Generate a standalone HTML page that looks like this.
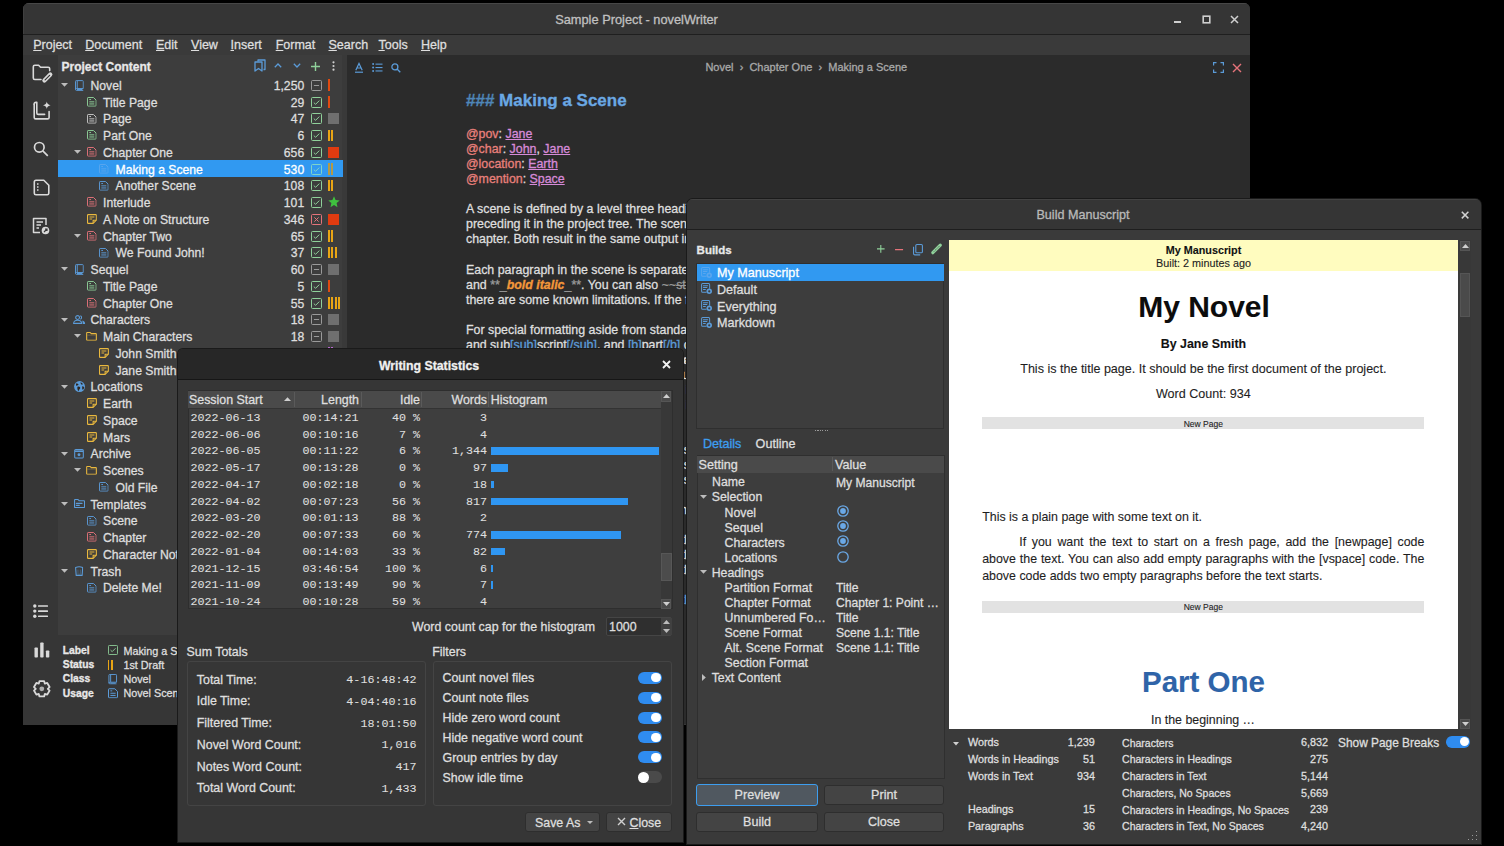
<!DOCTYPE html><html><head><meta charset="utf-8"><style>
*{margin:0;padding:0;box-sizing:border-box}
html,body{width:1504px;height:846px;overflow:hidden;background:#000}
body{position:relative;font-family:"Liberation Sans",sans-serif}
.win,.win *{position:absolute}
.win{overflow:hidden}
.win u, .win span, .win i, .win s{position:static}
.t{white-space:nowrap;-webkit-text-stroke:0.3px currentColor}
.m{font-family:"Liberation Mono",monospace;-webkit-text-stroke:0.1px currentColor}
svg{overflow:visible}
</style></head><body>
<svg width="0" height="0" style="position:absolute">
<defs>
<symbol id="doc" viewBox="0 0 10 10"><g fill="none" stroke="currentColor" stroke-width="1" stroke-linejoin="round"><path d="M0.5 1.2Q0.5 0.5 1.2 0.5H6.8L9.5 3.2V8.8Q9.5 9.5 8.8 9.5H1.2Q0.5 9.5 0.5 8.8Z"/><path d="M2.4 2.6H4.2M2.4 5H7.6M2.4 7.2H7.6"/></g></symbol>
<symbol id="note" viewBox="0 0 10 10"><g fill="none" stroke="currentColor" stroke-width="1.1" stroke-linejoin="round"><path d="M0.55 1.2Q0.55 0.55 1.2 0.55H8.8Q9.45 0.55 9.45 1.2V6.2L6.2 9.45H1.2Q0.55 9.45 0.55 8.8Z"/><path d="M6.2 9.3V6.2H9.3"/><path d="M2.5 2.9H7.5M2.5 5H5.3"/></g></symbol>
<symbol id="book" viewBox="0 0 9 11"><g fill="none" stroke="currentColor" stroke-width="1" stroke-linejoin="round"><path d="M0.5 1.3Q0.5 0.5 1.3 0.5H7.7Q8.5 0.5 8.5 1.3V8.6H1.6Q0.5 8.6 0.5 9.5V1.3Z"/><path d="M0.5 9.5Q0.5 10.5 1.6 10.5H8.5"/><path d="M2.3 0.8V8.3"/><path d="M2 9.6H7.5"/></g></symbol>
<symbol id="people" viewBox="0 0 12.4 9"><g fill="none" stroke="currentColor" stroke-width="1.05"><circle cx="4.6" cy="2.5" r="1.9"/><path d="M0.6 8.4Q0.6 5.3 4.6 5.3Q8.6 5.3 8.6 8.4Z"/><path d="M7.3 0.7A1.9 1.9 0 0 1 7.3 4.3"/></g><path d="M9.3 5.4Q12.2 6 12.2 8.9H9.8Z" fill="currentColor"/></symbol>
<symbol id="folder" viewBox="0 0 11 9"><path d="M0.55 1.1Q0.55 0.55 1.1 0.55H4.2L5.3 1.7H9.9Q10.45 1.7 10.45 2.3V7.9Q10.45 8.45 9.9 8.45H1.1Q0.55 8.45 0.55 7.9Z" fill="none" stroke="currentColor" stroke-width="1.1" stroke-linejoin="round"/><path d="M1.3 3.2H9.7" stroke="currentColor" stroke-width="0.6" opacity="0.5"/></symbol>
<symbol id="globe" viewBox="0 0 11 11"><circle cx="5.5" cy="5.5" r="5.4" fill="currentColor"/><path d="M1.9 2.6Q3.6 2 4.6 3.4Q3.6 4.4 2.9 4.6Q2.3 4.9 2.1 4.1Z M3.4 5.6Q5.3 5.2 6.1 6.2Q6.5 7.5 5.4 8.1Q4.6 9.6 4.3 10.2Q3.4 8.7 3.3 7.2Z M6.4 1.2Q8.3 1.8 8.9 3.2Q8.2 3.7 7.2 3.5Q6.5 2.5 6.4 1.2Z M8.2 5.2Q9.6 5.1 10.1 6.6Q9.5 8.4 8.5 8.7Q7.8 7.2 8.2 5.2Z" fill="#2d2620"/></symbol>
<symbol id="archive" viewBox="0 0 10 10"><g fill="none" stroke="currentColor" stroke-width="1.1" stroke-linejoin="round"><rect x="0.55" y="0.55" width="8.9" height="8.9" rx="1.1"/><path d="M0.8 2.6H9.2"/></g><path d="M1 1H9V2.4H1Z" fill="currentColor" opacity="0.6"/><circle cx="5" cy="5.9" r="1.5" fill="currentColor"/></symbol>
<symbol id="templ" viewBox="0 0 11 9"><g fill="none" stroke="currentColor" stroke-width="1.1" stroke-linejoin="round"><path d="M0.55 1.1Q0.55 0.55 1.1 0.55H4L5.1 1.7H9.9Q10.45 1.7 10.45 2.3V7.9Q10.45 8.45 9.9 8.45H1.1Q0.55 8.45 0.55 7.9Z"/></g><path d="M2.3 4.3H8M2.3 6.3H5.3" stroke="currentColor" stroke-width="1.1" stroke-linecap="round"/></symbol>
<symbol id="trash" viewBox="0 0 8.4 10"><g fill="none" stroke="currentColor" stroke-width="1.1" stroke-linejoin="round"><path d="M0.6 1.4Q4.2 0.1 7.8 1.4L7.2 9.4H1.2Z"/></g><path d="M3 3.5V7.8M5.4 3.5V7.8M2.4 8.2H6" stroke="currentColor" stroke-width="0.7" opacity="0.55"/></symbol>
<symbol id="chk" viewBox="0 0 11 11"><g fill="none" stroke="currentColor" stroke-width="1"><rect x="0.5" y="0.5" width="10" height="10" rx="1"/><path d="M2.8 5.6L4.6 7.3L8.3 3.6"/></g></symbol>
<symbol id="minus" viewBox="0 0 11 11"><g fill="none" stroke="currentColor" stroke-width="1"><rect x="0.5" y="0.5" width="10" height="10" rx="1"/><path d="M2.9 5.5H8.1"/></g></symbol>
<symbol id="xbox" viewBox="0 0 11 11"><g fill="none" stroke="currentColor" stroke-width="1"><rect x="0.5" y="0.5" width="10" height="10" rx="1"/><path d="M3.4 3.4L7.6 7.6M7.6 3.4L3.4 7.6"/></g></symbol>
<symbol id="star" viewBox="0 0 12 12"><path d="M6 0.3L7.6 4.1L11.7 4.4L8.6 7.1L9.5 11.2L6 9.1L2.5 11.2L3.4 7.1L0.3 4.4L4.4 4.1Z" fill="currentColor"/></symbol>
<symbol id="build" viewBox="0 0 11 11"><g fill="none" stroke="currentColor" stroke-width="1" stroke-linecap="round" stroke-linejoin="round"><path d="M8.5 5.2V1.6Q8.5 0.6 7.5 0.6H1.6Q0.6 0.6 0.6 1.6V8.1Q0.6 9.1 1.6 9.1H5"/><path d="M2.4 2.7H6.6M2.4 4.5H5.8M2.4 6.3H4.3"/></g><circle cx="8.1" cy="8.2" r="2.7" fill="currentColor"/><circle cx="8.1" cy="8.2" r="1.1" style="fill:var(--bg,#3d3d3d)"/></symbol>
</defs></svg>
<div class="win" style="left:23px;top:3px;width:1227px;height:722px;border-radius:6px 6px 0 0;background:#363636;"><div style="left:0.00px;top:0.00px;width:1227.00px;height:31.00px;background:#353535;"></div>
<div style="left:0.00px;top:31.00px;width:1227.00px;height:1.00px;background:#1f1f1f;"></div>
<div style="left:0.00px;top:0.00px;width:1227.00px;height:1.00px;background:#474747;"></div>
<div style="left:0.00px;top:0.00px;width:1.00px;height:31.00px;background:#3f3f3f;"></div>
<div class="t" style="top:11.26px;font-size:12.8px;line-height:12.8px;color:#c0c0c0;left:613.50px;transform:translateX(-50%);">Sample Project - novelWriter</div>
<div style="left:1151.00px;top:18.00px;width:7.00px;height:1.60px;background:#cfcfcf;"></div>
<svg style="left:1179.00px;top:12.00px;" width="9" height="9" viewBox="0 0 9 9"><rect x="1.2" y="1.2" width="6.6" height="6.6" fill="none" stroke="#cfcfcf" stroke-width="1.6"/></svg>
<svg style="left:1207.00px;top:12.00px;" width="9" height="9" viewBox="0 0 9 9"><path d="M1 1L8 8M8 1L1 8" stroke="#cfcfcf" stroke-width="1.5"/></svg>
<div style="left:0.00px;top:32.00px;width:1227.00px;height:20.00px;background:#3a3a3a;"></div>
<div class="t" style="top:35.62px;font-size:12.5px;line-height:12.5px;color:#dedede;left:10.20px;"><u>P</u>roject</div>
<div class="t" style="top:35.62px;font-size:12.5px;line-height:12.5px;color:#dedede;left:62.20px;"><u>D</u>ocument</div>
<div class="t" style="top:35.62px;font-size:12.5px;line-height:12.5px;color:#dedede;left:133.00px;"><u>E</u>dit</div>
<div class="t" style="top:35.62px;font-size:12.5px;line-height:12.5px;color:#dedede;left:168.00px;"><u>V</u>iew</div>
<div class="t" style="top:35.62px;font-size:12.5px;line-height:12.5px;color:#dedede;left:207.50px;"><u>I</u>nsert</div>
<div class="t" style="top:35.62px;font-size:12.5px;line-height:12.5px;color:#dedede;left:252.70px;"><u>F</u>ormat</div>
<div class="t" style="top:35.62px;font-size:12.5px;line-height:12.5px;color:#dedede;left:305.50px;"><u>S</u>earch</div>
<div class="t" style="top:35.62px;font-size:12.5px;line-height:12.5px;color:#dedede;left:355.50px;"><u>T</u>ools</div>
<div class="t" style="top:35.62px;font-size:12.5px;line-height:12.5px;color:#dedede;left:398.00px;"><u>H</u>elp</div>
<div style="left:0.00px;top:52.00px;width:35.00px;height:669.00px;background:#363636;"></div>
<div style="left:35.00px;top:52.00px;width:284.00px;height:580.00px;background:#3d3d3d;"></div>
<div style="left:319.00px;top:52.00px;width:4.50px;height:669.00px;background:#393939;"></div>
<div style="left:35.00px;top:632.00px;width:284.00px;height:89.00px;background:#363636;"></div>
<div style="left:323.50px;top:52.00px;width:903.50px;height:669.00px;background:#2b2b2b;"></div>
<svg style="left:8.50px;top:60.50px;" width="20" height="18" viewBox="0 0 20 18"><g fill="none" stroke="#d9d9d9" stroke-width="1.6" stroke-linejoin="round" stroke-linecap="round"><path d="M9 15.5H2.8Q1.3 15.5 1.3 14V2.8Q1.3 1.3 2.8 1.3H6.6L8.6 3.3H16.2Q17.7 3.3 17.7 4.8V6.6"/></g><path d="M18.3 10.6L12.4 16.5" stroke="#d9d9d9" stroke-width="4.2" stroke-linecap="round"/><path d="M17.6 11.3L13.1 15.8" stroke="#363636" stroke-width="1.2" stroke-linecap="round"/></svg>
<svg style="left:10.00px;top:97.50px;" width="18" height="19" viewBox="0 0 18 19"><g fill="none" stroke="#d9d9d9" stroke-width="1.6" stroke-linejoin="round" stroke-linecap="round"><path d="M1.2 3.2V16.4Q1.2 17.9 2.7 17.9H14.6Q16.1 17.9 16.1 16.4V10.6"/><path d="M1.2 3.2Q1.2 1.2 3 1.2H3.8V11.9Q3.8 13.4 5.3 13.4H11.6"/></g><path d="M13.8 0.6Q14.2 3.8 17.6 4.3Q14.2 4.8 13.8 8Q13.4 4.8 10 4.3Q13.4 3.8 13.8 0.6Z" fill="#d9d9d9"/></svg>
<svg style="left:10.00px;top:138.00px;" width="16" height="16" viewBox="0 0 16 16"><g fill="none" stroke="#d9d9d9" stroke-width="1.7"><circle cx="6.3" cy="6.3" r="4.8"/><path d="M9.8 9.8L14.8 14.8"/></g></svg>
<svg style="left:9.50px;top:176.00px;" width="17" height="17" viewBox="0 0 17 17"><g fill="none" stroke="#d9d9d9" stroke-width="1.6" stroke-linejoin="round"><path d="M3 1.2H10.8L15.8 6.2V14.2Q15.8 15.8 14.2 15.8H3Q1.3 15.8 1.3 14.2V2.9Q1.3 1.2 3 1.2Z"/></g><path d="M4 5H5.5M4 8H5.5M4 11H5.5" stroke="#d9d9d9" stroke-width="1.5"/></svg>
<svg style="left:9.00px;top:214.00px;" width="18" height="18" viewBox="0 0 18 18"><g fill="none" stroke="#d9d9d9" stroke-width="1.5" stroke-linejoin="round"><path d="M8 15.5H1.5V1.5H14V8"/><path d="M4.5 5H11M4.5 8H9M4.5 11H7"/></g><circle cx="13.5" cy="13.5" r="3.8" fill="#d9d9d9"/><path d="M12 15L15 12M13 12H15V14" stroke="#363636" stroke-width="1.2" fill="none"/></svg>
<svg style="left:9.50px;top:600.60px;" width="16" height="14" viewBox="0 0 16 14"><g fill="#d9d9d9"><circle cx="1.8" cy="2" r="1.7"/><circle cx="1.8" cy="7.1" r="1.7"/><circle cx="1.8" cy="12.2" r="1.7"/><rect x="5" y="1.2" width="10" height="1.6" rx="0.5"/><rect x="5" y="6.3" width="10" height="1.6" rx="0.5"/><rect x="5" y="11.4" width="10" height="1.6" rx="0.5"/></g></svg>
<svg style="left:10.50px;top:638.50px;" width="16" height="16" viewBox="0 0 16 16"><g fill="#d9d9d9"><rect x="0.5" y="5.5" width="3.4" height="10" rx="0.8"/><rect x="6.2" y="0.5" width="3.4" height="15" rx="0.8"/><rect x="11.9" y="8.5" width="3.4" height="7" rx="0.8"/></g></svg>
<svg style="left:9.80px;top:676.60px;" width="18" height="18" viewBox="0 0 18 18"><polygon points="6.44,1.16 11.16,1.16 11.78,3.59 11.82,3.61 14.24,2.93 16.60,7.03 14.80,8.78 14.80,8.82 16.60,10.57 14.24,14.67 11.82,13.99 11.78,14.01 11.16,16.44 6.44,16.44 5.82,14.01 5.78,13.99 3.36,14.67 1.00,10.57 2.80,8.82 2.80,8.78 1.00,7.03 3.36,2.93 5.78,3.61 5.82,3.59" fill="none" stroke="#d9d9d9" stroke-width="1.8" stroke-linejoin="round"/><circle cx="8.8" cy="8.8" r="2.4" fill="#b0b0b0"/></svg>
<div class="t" style="top:57.94px;font-size:12px;line-height:12px;color:#e8e8e8;font-weight:bold;left:38.50px;">Project Content</div>
<svg style="left:231.00px;top:56.00px;" width="12" height="13" viewBox="0 0 12 13"><g fill="none" stroke="#5b9bd8" stroke-width="1.3" stroke-linejoin="round"><path d="M4 2.5V1H11V10.5H9.5"/><path d="M1 3H8V12L4.5 9.5L1 12Z"/></g></svg>
<svg style="left:251.00px;top:60.00px;" width="8" height="5" viewBox="0 0 8 5"><path d="M0.8 4.2L4 1L7.2 4.2" fill="none" stroke="#5b9bd8" stroke-width="1.3"/></svg>
<svg style="left:270.00px;top:60.00px;" width="8" height="5" viewBox="0 0 8 5"><path d="M0.8 0.8L4 4L7.2 0.8" fill="none" stroke="#5b9bd8" stroke-width="1.3"/></svg>
<svg style="left:288.00px;top:58.50px;" width="9" height="9" viewBox="0 0 9 9"><path d="M4.5 0V9M0 4.5H9" stroke="#8fd19a" stroke-width="1.4"/></svg>
<svg style="left:309.00px;top:58.00px;" width="3" height="10" viewBox="0 0 3 10"><g fill="#d0d0d0"><circle cx="1.5" cy="1.3" r="1.1"/><circle cx="1.5" cy="5" r="1.1"/><circle cx="1.5" cy="8.7" r="1.1"/></g></svg>
<svg style="left:38.00px;top:80.10px;" width="7" height="4" viewBox="0 0 7 4"><path d="M0 0H7L3.5 3.8Z" fill="#bdbdbd"/></svg>
<svg style="left:51.80px;top:76.50px;color:#5b9bd8" width="8.8" height="11"><use href="#book"/></svg>
<div class="t" style="top:76.97px;font-size:12.2px;line-height:12.2px;color:#dedede;left:67.50px;">Novel</div>
<div class="t" style="top:76.97px;font-size:12.2px;line-height:12.2px;color:#dedede;left:281.20px;transform:translateX(-100%);">1,250</div>
<svg style="left:287.50px;top:76.80px;color:#9a9a9a" width="11" height="11"><use href="#minus"/></svg>
<div style="left:305.00px;top:76.30px;width:2.00px;height:11.60px;background:#e04a10;"></div>
<svg style="left:63.90px;top:93.90px;color:#8fd19a" width="9.6" height="9.7"><use href="#doc"/></svg>
<div class="t" style="top:93.72px;font-size:12.2px;line-height:12.2px;color:#dedede;left:80.00px;">Title Page</div>
<div class="t" style="top:93.72px;font-size:12.2px;line-height:12.2px;color:#dedede;left:281.20px;transform:translateX(-100%);">29</div>
<svg style="left:287.50px;top:93.55px;color:#8fd19a" width="11" height="11"><use href="#chk"/></svg>
<div style="left:305.00px;top:93.05px;width:2.00px;height:11.60px;background:#e04a10;"></div>
<svg style="left:63.90px;top:110.65px;color:#c8c8c8" width="9.6" height="9.7"><use href="#doc"/></svg>
<div class="t" style="top:110.47px;font-size:12.2px;line-height:12.2px;color:#dedede;left:80.00px;">Page</div>
<div class="t" style="top:110.47px;font-size:12.2px;line-height:12.2px;color:#dedede;left:281.20px;transform:translateX(-100%);">47</div>
<svg style="left:287.50px;top:110.30px;color:#8fd19a" width="11" height="11"><use href="#chk"/></svg>
<div style="left:305.00px;top:110.20px;width:11.00px;height:11.00px;background:#6f6f6f;"></div>
<svg style="left:63.90px;top:127.40px;color:#8fd19a" width="9.6" height="9.7"><use href="#doc"/></svg>
<div class="t" style="top:127.22px;font-size:12.2px;line-height:12.2px;color:#dedede;left:80.00px;">Part One</div>
<div class="t" style="top:127.22px;font-size:12.2px;line-height:12.2px;color:#dedede;left:281.20px;transform:translateX(-100%);">6</div>
<svg style="left:287.50px;top:127.05px;color:#8fd19a" width="11" height="11"><use href="#chk"/></svg>
<div style="left:305.00px;top:126.55px;width:2.00px;height:11.60px;background:#e9a514;"></div>
<div style="left:308.30px;top:126.55px;width:2.00px;height:11.60px;background:#e9a514;"></div>
<svg style="left:50.50px;top:147.10px;" width="7" height="4" viewBox="0 0 7 4"><path d="M0 0H7L3.5 3.8Z" fill="#bdbdbd"/></svg>
<svg style="left:63.90px;top:144.15px;color:#e5737a" width="9.6" height="9.7"><use href="#doc"/></svg>
<div class="t" style="top:143.97px;font-size:12.2px;line-height:12.2px;color:#dedede;left:80.00px;">Chapter One</div>
<div class="t" style="top:143.97px;font-size:12.2px;line-height:12.2px;color:#dedede;left:281.20px;transform:translateX(-100%);">656</div>
<svg style="left:287.50px;top:143.80px;color:#8fd19a" width="11" height="11"><use href="#chk"/></svg>
<div style="left:305.00px;top:143.70px;width:11.00px;height:11.00px;background:#e03b10;"></div>
<div style="left:35.00px;top:157.00px;width:284.50px;height:17.00px;background:#3199f1;"></div>
<svg style="left:76.40px;top:160.90px;color:#5aa6ee" width="9.6" height="9.7"><use href="#doc"/></svg>
<div class="t" style="top:160.72px;font-size:12.2px;line-height:12.2px;color:#ffffff;left:92.50px;">Making a Scene</div>
<div class="t" style="top:160.72px;font-size:12.2px;line-height:12.2px;color:#ffffff;left:281.20px;transform:translateX(-100%);">530</div>
<svg style="left:287.50px;top:160.55px;color:#7fd3c8" width="11" height="11"><use href="#chk"/></svg>
<div style="left:305.00px;top:160.05px;width:2.00px;height:11.60px;background:#b59a45;"></div>
<div style="left:308.30px;top:160.05px;width:2.00px;height:11.60px;background:#b59a45;"></div>
<svg style="left:76.40px;top:177.65px;color:#5b9bd8" width="9.6" height="9.7"><use href="#doc"/></svg>
<div class="t" style="top:177.47px;font-size:12.2px;line-height:12.2px;color:#dedede;left:92.50px;">Another Scene</div>
<div class="t" style="top:177.47px;font-size:12.2px;line-height:12.2px;color:#dedede;left:281.20px;transform:translateX(-100%);">108</div>
<svg style="left:287.50px;top:177.30px;color:#8fd19a" width="11" height="11"><use href="#chk"/></svg>
<div style="left:305.00px;top:176.80px;width:2.00px;height:11.60px;background:#e9a514;"></div>
<div style="left:308.30px;top:176.80px;width:2.00px;height:11.60px;background:#e9a514;"></div>
<svg style="left:63.90px;top:194.40px;color:#e5737a" width="9.6" height="9.7"><use href="#doc"/></svg>
<div class="t" style="top:194.22px;font-size:12.2px;line-height:12.2px;color:#dedede;left:80.00px;">Interlude</div>
<div class="t" style="top:194.22px;font-size:12.2px;line-height:12.2px;color:#dedede;left:281.20px;transform:translateX(-100%);">101</div>
<svg style="left:287.50px;top:194.05px;color:#8fd19a" width="11" height="11"><use href="#chk"/></svg>
<svg style="left:304.50px;top:193.35px;color:#3fc13f" width="12" height="12"><use href="#star"/></svg>
<svg style="left:63.75px;top:211.00px;color:#e9b83e" width="9.9" height="10"><use href="#note"/></svg>
<div class="t" style="top:210.97px;font-size:12.2px;line-height:12.2px;color:#dedede;left:80.00px;">A Note on Structure</div>
<div class="t" style="top:210.97px;font-size:12.2px;line-height:12.2px;color:#dedede;left:281.20px;transform:translateX(-100%);">346</div>
<svg style="left:287.50px;top:210.80px;color:#e5737a" width="11" height="11"><use href="#xbox"/></svg>
<div style="left:305.00px;top:210.70px;width:11.00px;height:11.00px;background:#e03b10;"></div>
<svg style="left:50.50px;top:230.85px;" width="7" height="4" viewBox="0 0 7 4"><path d="M0 0H7L3.5 3.8Z" fill="#bdbdbd"/></svg>
<svg style="left:63.90px;top:227.90px;color:#e5737a" width="9.6" height="9.7"><use href="#doc"/></svg>
<div class="t" style="top:227.72px;font-size:12.2px;line-height:12.2px;color:#dedede;left:80.00px;">Chapter Two</div>
<div class="t" style="top:227.72px;font-size:12.2px;line-height:12.2px;color:#dedede;left:281.20px;transform:translateX(-100%);">65</div>
<svg style="left:287.50px;top:227.55px;color:#8fd19a" width="11" height="11"><use href="#chk"/></svg>
<div style="left:305.00px;top:227.05px;width:2.00px;height:11.60px;background:#e9a514;"></div>
<div style="left:308.30px;top:227.05px;width:2.00px;height:11.60px;background:#e9a514;"></div>
<svg style="left:76.40px;top:244.65px;color:#5b9bd8" width="9.6" height="9.7"><use href="#doc"/></svg>
<div class="t" style="top:244.47px;font-size:12.2px;line-height:12.2px;color:#dedede;left:92.50px;">We Found John!</div>
<div class="t" style="top:244.47px;font-size:12.2px;line-height:12.2px;color:#dedede;left:281.20px;transform:translateX(-100%);">37</div>
<svg style="left:287.50px;top:244.30px;color:#8fd19a" width="11" height="11"><use href="#chk"/></svg>
<div style="left:305.00px;top:243.80px;width:2.00px;height:11.60px;background:#e9a514;"></div>
<div style="left:308.30px;top:243.80px;width:2.00px;height:11.60px;background:#e9a514;"></div>
<div style="left:311.60px;top:243.80px;width:2.00px;height:11.60px;background:#e9a514;"></div>
<svg style="left:38.00px;top:264.35px;" width="7" height="4" viewBox="0 0 7 4"><path d="M0 0H7L3.5 3.8Z" fill="#bdbdbd"/></svg>
<svg style="left:51.80px;top:260.75px;color:#5b9bd8" width="8.8" height="11"><use href="#book"/></svg>
<div class="t" style="top:261.22px;font-size:12.2px;line-height:12.2px;color:#dedede;left:67.50px;">Sequel</div>
<div class="t" style="top:261.22px;font-size:12.2px;line-height:12.2px;color:#dedede;left:281.20px;transform:translateX(-100%);">60</div>
<svg style="left:287.50px;top:261.05px;color:#9a9a9a" width="11" height="11"><use href="#minus"/></svg>
<div style="left:305.00px;top:260.95px;width:11.00px;height:11.00px;background:#6f6f6f;"></div>
<svg style="left:63.90px;top:278.15px;color:#8fd19a" width="9.6" height="9.7"><use href="#doc"/></svg>
<div class="t" style="top:277.97px;font-size:12.2px;line-height:12.2px;color:#dedede;left:80.00px;">Title Page</div>
<div class="t" style="top:277.97px;font-size:12.2px;line-height:12.2px;color:#dedede;left:281.20px;transform:translateX(-100%);">5</div>
<svg style="left:287.50px;top:277.80px;color:#8fd19a" width="11" height="11"><use href="#chk"/></svg>
<div style="left:305.00px;top:277.30px;width:2.00px;height:11.60px;background:#e04a10;"></div>
<svg style="left:63.90px;top:294.90px;color:#e5737a" width="9.6" height="9.7"><use href="#doc"/></svg>
<div class="t" style="top:294.72px;font-size:12.2px;line-height:12.2px;color:#dedede;left:80.00px;">Chapter One</div>
<div class="t" style="top:294.72px;font-size:12.2px;line-height:12.2px;color:#dedede;left:281.20px;transform:translateX(-100%);">55</div>
<svg style="left:287.50px;top:294.55px;color:#8fd19a" width="11" height="11"><use href="#chk"/></svg>
<div style="left:305.00px;top:294.05px;width:2.00px;height:11.60px;background:#e9a514;"></div>
<div style="left:308.30px;top:294.05px;width:2.00px;height:11.60px;background:#e9a514;"></div>
<div style="left:311.60px;top:294.05px;width:2.00px;height:11.60px;background:#e9a514;"></div>
<div style="left:314.90px;top:294.05px;width:2.00px;height:11.60px;background:#e9a514;"></div>
<svg style="left:38.00px;top:314.60px;" width="7" height="4" viewBox="0 0 7 4"><path d="M0 0H7L3.5 3.8Z" fill="#bdbdbd"/></svg>
<svg style="left:50.00px;top:312.00px;color:#5b9bd8" width="12.4" height="9"><use href="#people"/></svg>
<div class="t" style="top:311.47px;font-size:12.2px;line-height:12.2px;color:#dedede;left:67.50px;">Characters</div>
<div class="t" style="top:311.47px;font-size:12.2px;line-height:12.2px;color:#dedede;left:281.20px;transform:translateX(-100%);">18</div>
<svg style="left:287.50px;top:311.30px;color:#9a9a9a" width="11" height="11"><use href="#minus"/></svg>
<div style="left:305.00px;top:311.20px;width:11.00px;height:11.00px;background:#6f6f6f;"></div>
<svg style="left:50.50px;top:331.35px;" width="7" height="4" viewBox="0 0 7 4"><path d="M0 0H7L3.5 3.8Z" fill="#bdbdbd"/></svg>
<svg style="left:63.20px;top:328.85px;color:#e9b83e" width="11" height="8.8"><use href="#folder"/></svg>
<div class="t" style="top:328.22px;font-size:12.2px;line-height:12.2px;color:#dedede;left:80.00px;">Main Characters</div>
<div class="t" style="top:328.22px;font-size:12.2px;line-height:12.2px;color:#dedede;left:281.20px;transform:translateX(-100%);">18</div>
<svg style="left:287.50px;top:328.05px;color:#9a9a9a" width="11" height="11"><use href="#minus"/></svg>
<div style="left:305.00px;top:327.95px;width:11.00px;height:11.00px;background:#6f6f6f;"></div>
<svg style="left:76.25px;top:345.00px;color:#e9b83e" width="9.9" height="10"><use href="#note"/></svg>
<div class="t" style="top:344.97px;font-size:12.2px;line-height:12.2px;color:#dedede;left:92.50px;">John Smith</div>
<div class="t" style="top:344.97px;font-size:12.2px;line-height:12.2px;color:#dedede;left:281.20px;transform:translateX(-100%);">3</div>
<svg style="left:287.50px;top:344.80px;color:#8fd19a" width="11" height="11"><use href="#chk"/></svg>
<div style="left:305.00px;top:344.30px;width:2.00px;height:11.60px;background:#b868d0;"></div>
<div style="left:308.30px;top:344.30px;width:2.00px;height:11.60px;background:#b868d0;"></div>
<svg style="left:76.25px;top:361.75px;color:#e9b83e" width="9.9" height="10"><use href="#note"/></svg>
<div class="t" style="top:361.72px;font-size:12.2px;line-height:12.2px;color:#dedede;left:92.50px;">Jane Smith</div>
<div class="t" style="top:361.72px;font-size:12.2px;line-height:12.2px;color:#dedede;left:281.20px;transform:translateX(-100%);">3</div>
<svg style="left:287.50px;top:361.55px;color:#8fd19a" width="11" height="11"><use href="#chk"/></svg>
<div style="left:305.00px;top:361.05px;width:2.00px;height:11.60px;background:#b868d0;"></div>
<div style="left:308.30px;top:361.05px;width:2.00px;height:11.60px;background:#b868d0;"></div>
<svg style="left:38.00px;top:381.60px;" width="7" height="4" viewBox="0 0 7 4"><path d="M0 0H7L3.5 3.8Z" fill="#bdbdbd"/></svg>
<svg style="left:50.65px;top:377.95px;color:#5b9bd8" width="11.1" height="11.1"><use href="#globe"/></svg>
<div class="t" style="top:378.47px;font-size:12.2px;line-height:12.2px;color:#dedede;left:67.50px;">Locations</div>
<svg style="left:63.75px;top:395.25px;color:#e9b83e" width="9.9" height="10"><use href="#note"/></svg>
<div class="t" style="top:395.22px;font-size:12.2px;line-height:12.2px;color:#dedede;left:80.00px;">Earth</div>
<svg style="left:63.75px;top:412.00px;color:#e9b83e" width="9.9" height="10"><use href="#note"/></svg>
<div class="t" style="top:411.97px;font-size:12.2px;line-height:12.2px;color:#dedede;left:80.00px;">Space</div>
<svg style="left:63.75px;top:428.75px;color:#e9b83e" width="9.9" height="10"><use href="#note"/></svg>
<div class="t" style="top:428.72px;font-size:12.2px;line-height:12.2px;color:#dedede;left:80.00px;">Mars</div>
<svg style="left:38.00px;top:448.60px;" width="7" height="4" viewBox="0 0 7 4"><path d="M0 0H7L3.5 3.8Z" fill="#bdbdbd"/></svg>
<svg style="left:51.20px;top:445.65px;color:#5b9bd8" width="10" height="9.7"><use href="#archive"/></svg>
<div class="t" style="top:445.47px;font-size:12.2px;line-height:12.2px;color:#dedede;left:67.50px;">Archive</div>
<svg style="left:50.50px;top:465.35px;" width="7" height="4" viewBox="0 0 7 4"><path d="M0 0H7L3.5 3.8Z" fill="#bdbdbd"/></svg>
<svg style="left:63.20px;top:462.85px;color:#e9b83e" width="11" height="8.8"><use href="#folder"/></svg>
<div class="t" style="top:462.22px;font-size:12.2px;line-height:12.2px;color:#dedede;left:80.00px;">Scenes</div>
<svg style="left:76.40px;top:479.15px;color:#5b9bd8" width="9.6" height="9.7"><use href="#doc"/></svg>
<div class="t" style="top:478.97px;font-size:12.2px;line-height:12.2px;color:#dedede;left:92.50px;">Old File</div>
<svg style="left:38.00px;top:498.85px;" width="7" height="4" viewBox="0 0 7 4"><path d="M0 0H7L3.5 3.8Z" fill="#bdbdbd"/></svg>
<svg style="left:50.65px;top:496.20px;color:#5b9bd8" width="11.1" height="9.1"><use href="#templ"/></svg>
<div class="t" style="top:495.72px;font-size:12.2px;line-height:12.2px;color:#dedede;left:67.50px;">Templates</div>
<svg style="left:63.90px;top:512.65px;color:#5b9bd8" width="9.6" height="9.7"><use href="#doc"/></svg>
<div class="t" style="top:512.47px;font-size:12.2px;line-height:12.2px;color:#dedede;left:80.00px;">Scene</div>
<svg style="left:63.90px;top:529.40px;color:#e5737a" width="9.6" height="9.7"><use href="#doc"/></svg>
<div class="t" style="top:529.22px;font-size:12.2px;line-height:12.2px;color:#dedede;left:80.00px;">Chapter</div>
<svg style="left:63.75px;top:546.00px;color:#e9b83e" width="9.9" height="10"><use href="#note"/></svg>
<div class="t" style="top:545.97px;font-size:12.2px;line-height:12.2px;color:#dedede;left:80.00px;">Character Note</div>
<svg style="left:38.00px;top:565.85px;" width="7" height="4" viewBox="0 0 7 4"><path d="M0 0H7L3.5 3.8Z" fill="#bdbdbd"/></svg>
<svg style="left:52.05px;top:562.75px;color:#5b9bd8" width="8.3" height="10"><use href="#trash"/></svg>
<div class="t" style="top:562.72px;font-size:12.2px;line-height:12.2px;color:#dedede;left:67.50px;">Trash</div>
<svg style="left:63.90px;top:579.65px;color:#5b9bd8" width="9.6" height="9.7"><use href="#doc"/></svg>
<div class="t" style="top:579.47px;font-size:12.2px;line-height:12.2px;color:#dedede;left:80.00px;">Delete Me!</div>
<div class="t" style="top:643.08px;font-size:10.3px;line-height:10.3px;color:#e8e8e8;font-weight:bold;left:39.80px;">Label</div>
<div class="t" style="top:657.28px;font-size:10.3px;line-height:10.3px;color:#e8e8e8;font-weight:bold;left:39.80px;">Status</div>
<div class="t" style="top:671.48px;font-size:10.3px;line-height:10.3px;color:#e8e8e8;font-weight:bold;left:39.80px;">Class</div>
<div class="t" style="top:685.68px;font-size:10.3px;line-height:10.3px;color:#e8e8e8;font-weight:bold;left:39.80px;">Usage</div>
<svg style="left:84.50px;top:642.00px;color:#8fd19a" width="10" height="10"><use href="#chk"/></svg>
<div style="left:84.50px;top:656.50px;width:1.80px;height:10.50px;background:#e9a514;"></div>
<div style="left:88.00px;top:656.50px;width:1.80px;height:10.50px;background:#e9a514;"></div>
<svg style="left:85.00px;top:670.50px;color:#5b9bd8" width="9.5" height="10.5"><use href="#book"/></svg>
<svg style="left:84.50px;top:684.50px;color:#5b9bd8" width="10" height="10.5"><use href="#doc"/></svg>
<div class="t" style="top:642.66px;font-size:10.8px;line-height:10.8px;color:#dedede;left:100.40px;">Making a Scene</div>
<div class="t" style="top:656.86px;font-size:10.8px;line-height:10.8px;color:#dedede;left:100.40px;">1st Draft</div>
<div class="t" style="top:671.06px;font-size:10.8px;line-height:10.8px;color:#dedede;left:100.40px;">Novel</div>
<div class="t" style="top:685.26px;font-size:10.8px;line-height:10.8px;color:#dedede;left:100.40px;">Novel Scene</div>
<svg style="left:332.00px;top:59.50px;" width="8" height="10" viewBox="0 0 8 10"><path d="M0.8 7.2L4 0.5L7.2 7.2M2 5H6" fill="none" stroke="#5b9bd8" stroke-width="1.2"/><rect x="0" y="8.6" width="8" height="1.2" fill="#5b9bd8"/></svg>
<svg style="left:349.00px;top:60.00px;" width="11" height="9" viewBox="0 0 11 9"><g fill="#5b9bd8"><circle cx="1.1" cy="1.1" r="1"/><circle cx="1.1" cy="4.5" r="1"/><circle cx="1.1" cy="7.9" r="1"/><rect x="3.5" y="0.6" width="7" height="1.1"/><rect x="3.5" y="4" width="7" height="1.1"/><rect x="3.5" y="7.4" width="7" height="1.1"/></g></svg>
<svg style="left:367.50px;top:59.50px;" width="10" height="10" viewBox="0 0 10 10"><g fill="none" stroke="#5b9bd8" stroke-width="1.3"><circle cx="3.9" cy="3.9" r="3"/><path d="M6 6L9.3 9.3"/></g></svg>
<div class="t" style="top:59.39px;font-size:11px;line-height:11px;color:#a9a9a9;left:682.40px;">Novel &nbsp;›&nbsp; Chapter One &nbsp;›&nbsp; Making a Scene</div>
<svg style="left:1190.00px;top:59.00px;" width="11" height="11" viewBox="0 0 11 11"><path d="M0.6 3.5V0.6H3.5M7.5 0.6H10.4V3.5M10.4 7.5V10.4H7.5M3.5 10.4H0.6V7.5" fill="none" stroke="#5b9bd8" stroke-width="1.2"/></svg>
<svg style="left:1209.00px;top:59.50px;" width="10" height="10" viewBox="0 0 10 10"><path d="M1 1L9 9M9 1L1 9" stroke="#e5737a" stroke-width="1.4"/></svg>
<div class="t" style="top:88.71px;font-size:17px;line-height:17px;color:#6aa8e4;font-weight:bold;left:443.00px;"><span style="color:#4f86b8">###</span> Making a Scene</div>
<div class="t" style="top:125.10px;font-size:12.4px;line-height:12.4px;color:#dedede;left:443.00px;"><span style="color:#e9807b">@pov</span>: <u style="color:#d68ad8">Jane</u></div>
<div class="t" style="top:140.10px;font-size:12.4px;line-height:12.4px;color:#dedede;left:443.00px;"><span style="color:#e9807b">@char</span>: <u style="color:#d68ad8">John</u>, <u style="color:#d68ad8">Jane</u></div>
<div class="t" style="top:155.10px;font-size:12.4px;line-height:12.4px;color:#dedede;left:443.00px;"><span style="color:#e9807b">@location</span>: <u style="color:#d68ad8">Earth</u></div>
<div class="t" style="top:170.10px;font-size:12.4px;line-height:12.4px;color:#dedede;left:443.00px;"><span style="color:#e9807b">@mention</span>: <u style="color:#d68ad8">Space</u></div>
<div class="t" style="top:200.10px;font-size:12.4px;line-height:12.4px;color:#dedede;left:443.00px;white-space:nowrap;">A scene is defined by a level three heading. It can be separated from the chapter heading</div>
<div class="t" style="top:215.10px;font-size:12.4px;line-height:12.4px;color:#dedede;left:443.00px;white-space:nowrap;">preceding it in the project tree. The scene can also be in the same document as the</div>
<div class="t" style="top:230.10px;font-size:12.4px;line-height:12.4px;color:#dedede;left:443.00px;white-space:nowrap;">chapter. Both result in the same output in the manuscript.</div>
<div class="t" style="top:260.85px;font-size:12.4px;line-height:12.4px;color:#dedede;left:443.00px;white-space:nowrap;">Each paragraph in the scene is separated by a blank line. You can use **bold**, _italic_</div>
<div class="t" style="top:275.85px;font-size:12.4px;line-height:12.4px;color:#dedede;left:443.00px;white-space:nowrap;">and <span style="color:#9a9a9a">**_</span><i style="color:#f4973a;font-weight:bold">bold italic</i><span style="color:#9a9a9a">_**</span>. You can also <span style="color:#9a9a9a">~~<s>strikethrough</s>~~</span> text, but</div>
<div class="t" style="top:290.85px;font-size:12.4px;line-height:12.4px;color:#dedede;left:443.00px;white-space:nowrap;">there are some known limitations. If the formatting gets tricky, the editor will show it.</div>
<div class="t" style="top:320.85px;font-size:12.4px;line-height:12.4px;color:#dedede;left:443.00px;white-space:nowrap;">For special formatting aside from standard markdown, you can use super[sup]script[/sup]</div>
<div class="t" style="top:335.85px;font-size:12.4px;line-height:12.4px;color:#dedede;left:443.00px;white-space:nowrap;">and sub<span style="color:#5b9bd8">[sub]</span>script<span style="color:#5b9bd8">[/sub]</span>, and <span style="color:#5b9bd8">[b]</span>part<span style="color:#5b9bd8">[/b]</span> of words.</div>
<div class="t" style="top:350.85px;font-size:12.4px;line-height:12.4px;color:#dedede;left:443.00px;white-space:nowrap;">The formatting codes are highlighted in a different colour in the editor.</div>
<div class="t" style="top:365.85px;font-size:12.4px;line-height:12.4px;color:#dedede;left:443.00px;white-space:nowrap;">There are also shortcodes that are useful when the text starts.</div>
<div class="t" style="top:350.85px;font-size:12.4px;line-height:12.4px;color:#dedede;left:443.00px;white-space:nowrap;">is also possible to add a short description that is shown in the outline view and here</div>
<div class="t" style="top:365.85px;font-size:12.4px;line-height:12.4px;color:#dedede;left:443.00px;white-space:nowrap;">this is a short line</div>
<div class="t" style="top:380.85px;font-size:12.4px;line-height:12.4px;color:#dedede;left:443.00px;white-space:nowrap;">the text of the scene is written here and it continues onwards for a while and more</div>
<div class="t" style="top:395.85px;font-size:12.4px;line-height:12.4px;color:#dedede;left:443.00px;white-space:nowrap;">the text of the scene is written here and it continues onwards for a while and more</div>
<div class="t" style="top:440.85px;font-size:12.4px;line-height:12.4px;color:#dedede;left:443.00px;white-space:nowrap;">of the text in this paragraph is marked as a synopsis comment that is shown in the outline</div>
<div class="t" style="top:455.85px;font-size:12.4px;line-height:12.4px;color:#dedede;left:443.00px;white-space:nowrap;">of the text in this paragraph is marked as a synopsis comment that is shown as well</div>
<div class="t" style="top:470.85px;font-size:12.4px;line-height:12.4px;color:#dedede;left:443.00px;white-space:nowrap;">of the text in this paragraph is marked as a synopsis comment that is shown in text v</div>
<div class="t" style="top:500.85px;font-size:12.4px;line-height:12.4px;color:#dedede;left:443.00px;white-space:nowrap;">the text in this paragraph is also highlighted <span style="color:#5b9bd8">in some way that shows what it is</span></div>
<div class="t" style="top:530.85px;font-size:12.4px;line-height:12.4px;color:#dedede;left:443.00px;white-space:nowrap;">there is text here that is showing some things about the format of the code and F|</div>
<div class="t" style="top:545.85px;font-size:12.4px;line-height:12.4px;color:#dedede;left:443.00px;white-space:nowrap;">there is text here that is showing some things about the format of the code and p|</div>
<div class="t" style="top:560.85px;font-size:12.4px;line-height:12.4px;color:#dedede;left:443.00px;white-space:nowrap;">there is text here that is showing some things about the format of the code and c</div>
<div class="t" style="top:590.85px;font-size:12.4px;line-height:12.4px;color:#dedede;left:443.00px;white-space:nowrap;">there is text here that is showing some <span style="color:#5b9bd8">things about the format of the code and</span></div></div>
<div class="win" style="left:178px;top:348.5px;width:505px;height:493.5px;background:#363636;border-radius:5px 5px 0 0;box-shadow:0 0 0 1px #1a1a1a;"><div style="left:0.00px;top:0.00px;width:505.00px;height:30.50px;background:#272727;"></div>
<div style="left:0.00px;top:30.50px;width:505.00px;height:1.20px;background:#161616;"></div>
<div class="t" style="top:11.69px;font-size:12.3px;line-height:12.3px;color:#f0f0f0;font-weight:bold;left:251.00px;transform:translateX(-50%);">Writing Statistics</div>
<svg style="left:483.50px;top:11.50px;" width="9" height="9" viewBox="0 0 9 9"><path d="M1 1L8 8M8 1L1 8" stroke="#f2f2f2" stroke-width="1.8"/></svg>
<div style="left:9.50px;top:41.50px;width:485.00px;height:219.00px;background:#3e3e3e;border:1px solid #2e2e2e;"></div>
<div style="left:10.00px;top:42.00px;width:472.50px;height:17.50px;background:#4a4a4a;"></div>
<div style="left:10.00px;top:59.50px;width:472.50px;height:1.00px;background:#333;"></div>
<div style="left:116.00px;top:43.50px;width:1.00px;height:15.00px;background:#5a5a5a;"></div>
<div style="left:182.60px;top:43.50px;width:1.00px;height:15.00px;background:#5a5a5a;"></div>
<div style="left:242.50px;top:43.50px;width:1.00px;height:15.00px;background:#5a5a5a;"></div>
<div style="left:309.50px;top:43.50px;width:1.00px;height:15.00px;background:#5a5a5a;"></div>
<div class="t" style="top:45.90px;font-size:12.4px;line-height:12.4px;color:#dedede;left:11.00px;">Session Start</div>
<svg style="left:105.50px;top:48.00px;" width="7" height="4" viewBox="0 0 7 4"><path d="M0 4L3.5 0.3L7 4Z" fill="#cfcfcf"/></svg>
<div class="t" style="top:45.90px;font-size:12.4px;line-height:12.4px;color:#dedede;left:181.00px;transform:translateX(-100%);">Length</div>
<div class="t" style="top:45.90px;font-size:12.4px;line-height:12.4px;color:#dedede;left:242.00px;transform:translateX(-100%);">Idle</div>
<div class="t" style="top:45.90px;font-size:12.4px;line-height:12.4px;color:#dedede;left:309.00px;transform:translateX(-100%);">Words</div>
<div class="t" style="top:45.90px;font-size:12.4px;line-height:12.4px;color:#dedede;left:312.80px;">Histogram</div>
<div class="t m" style="top:64.43px;font-size:11.7px;line-height:11.7px;color:#dedede;left:12.40px;">2022-06-13</div>
<div class="t m" style="top:64.43px;font-size:11.7px;line-height:11.7px;color:#dedede;left:180.50px;transform:translateX(-100%);">00:14:21</div>
<div class="t m" style="top:64.43px;font-size:11.7px;line-height:11.7px;color:#dedede;left:242.00px;transform:translateX(-100%);">40 %</div>
<div class="t m" style="top:64.43px;font-size:11.7px;line-height:11.7px;color:#dedede;left:309.00px;transform:translateX(-100%);">3</div>
<div class="t m" style="top:81.18px;font-size:11.7px;line-height:11.7px;color:#dedede;left:12.40px;">2022-06-06</div>
<div class="t m" style="top:81.18px;font-size:11.7px;line-height:11.7px;color:#dedede;left:180.50px;transform:translateX(-100%);">00:10:16</div>
<div class="t m" style="top:81.18px;font-size:11.7px;line-height:11.7px;color:#dedede;left:242.00px;transform:translateX(-100%);">7 %</div>
<div class="t m" style="top:81.18px;font-size:11.7px;line-height:11.7px;color:#dedede;left:309.00px;transform:translateX(-100%);">4</div>
<div class="t m" style="top:97.93px;font-size:11.7px;line-height:11.7px;color:#dedede;left:12.40px;">2022-06-05</div>
<div class="t m" style="top:97.93px;font-size:11.7px;line-height:11.7px;color:#dedede;left:180.50px;transform:translateX(-100%);">00:11:22</div>
<div class="t m" style="top:97.93px;font-size:11.7px;line-height:11.7px;color:#dedede;left:242.00px;transform:translateX(-100%);">6 %</div>
<div class="t m" style="top:97.93px;font-size:11.7px;line-height:11.7px;color:#dedede;left:309.00px;transform:translateX(-100%);">1,344</div>
<div style="left:313.40px;top:98.80px;width:167.60px;height:7.50px;background:#2f96f2;"></div>
<div class="t m" style="top:114.68px;font-size:11.7px;line-height:11.7px;color:#dedede;left:12.40px;">2022-05-17</div>
<div class="t m" style="top:114.68px;font-size:11.7px;line-height:11.7px;color:#dedede;left:180.50px;transform:translateX(-100%);">00:13:28</div>
<div class="t m" style="top:114.68px;font-size:11.7px;line-height:11.7px;color:#dedede;left:242.00px;transform:translateX(-100%);">0 %</div>
<div class="t m" style="top:114.68px;font-size:11.7px;line-height:11.7px;color:#dedede;left:309.00px;transform:translateX(-100%);">97</div>
<div style="left:313.40px;top:115.55px;width:16.26px;height:7.50px;background:#2f96f2;"></div>
<div class="t m" style="top:131.43px;font-size:11.7px;line-height:11.7px;color:#dedede;left:12.40px;">2022-04-17</div>
<div class="t m" style="top:131.43px;font-size:11.7px;line-height:11.7px;color:#dedede;left:180.50px;transform:translateX(-100%);">00:02:18</div>
<div class="t m" style="top:131.43px;font-size:11.7px;line-height:11.7px;color:#dedede;left:242.00px;transform:translateX(-100%);">0 %</div>
<div class="t m" style="top:131.43px;font-size:11.7px;line-height:11.7px;color:#dedede;left:309.00px;transform:translateX(-100%);">18</div>
<div style="left:313.40px;top:132.30px;width:3.02px;height:7.50px;background:#2f96f2;"></div>
<div class="t m" style="top:148.18px;font-size:11.7px;line-height:11.7px;color:#dedede;left:12.40px;">2022-04-02</div>
<div class="t m" style="top:148.18px;font-size:11.7px;line-height:11.7px;color:#dedede;left:180.50px;transform:translateX(-100%);">00:07:23</div>
<div class="t m" style="top:148.18px;font-size:11.7px;line-height:11.7px;color:#dedede;left:242.00px;transform:translateX(-100%);">56 %</div>
<div class="t m" style="top:148.18px;font-size:11.7px;line-height:11.7px;color:#dedede;left:309.00px;transform:translateX(-100%);">817</div>
<div style="left:313.40px;top:149.05px;width:136.93px;height:7.50px;background:#2f96f2;"></div>
<div class="t m" style="top:164.93px;font-size:11.7px;line-height:11.7px;color:#dedede;left:12.40px;">2022-03-20</div>
<div class="t m" style="top:164.93px;font-size:11.7px;line-height:11.7px;color:#dedede;left:180.50px;transform:translateX(-100%);">00:01:13</div>
<div class="t m" style="top:164.93px;font-size:11.7px;line-height:11.7px;color:#dedede;left:242.00px;transform:translateX(-100%);">88 %</div>
<div class="t m" style="top:164.93px;font-size:11.7px;line-height:11.7px;color:#dedede;left:309.00px;transform:translateX(-100%);">2</div>
<div class="t m" style="top:181.68px;font-size:11.7px;line-height:11.7px;color:#dedede;left:12.40px;">2022-02-20</div>
<div class="t m" style="top:181.68px;font-size:11.7px;line-height:11.7px;color:#dedede;left:180.50px;transform:translateX(-100%);">00:07:33</div>
<div class="t m" style="top:181.68px;font-size:11.7px;line-height:11.7px;color:#dedede;left:242.00px;transform:translateX(-100%);">60 %</div>
<div class="t m" style="top:181.68px;font-size:11.7px;line-height:11.7px;color:#dedede;left:309.00px;transform:translateX(-100%);">774</div>
<div style="left:313.40px;top:182.55px;width:129.72px;height:7.50px;background:#2f96f2;"></div>
<div class="t m" style="top:198.43px;font-size:11.7px;line-height:11.7px;color:#dedede;left:12.40px;">2022-01-04</div>
<div class="t m" style="top:198.43px;font-size:11.7px;line-height:11.7px;color:#dedede;left:180.50px;transform:translateX(-100%);">00:14:03</div>
<div class="t m" style="top:198.43px;font-size:11.7px;line-height:11.7px;color:#dedede;left:242.00px;transform:translateX(-100%);">33 %</div>
<div class="t m" style="top:198.43px;font-size:11.7px;line-height:11.7px;color:#dedede;left:309.00px;transform:translateX(-100%);">82</div>
<div style="left:313.40px;top:199.30px;width:13.74px;height:7.50px;background:#2f96f2;"></div>
<div class="t m" style="top:215.18px;font-size:11.7px;line-height:11.7px;color:#dedede;left:12.40px;">2021-12-15</div>
<div class="t m" style="top:215.18px;font-size:11.7px;line-height:11.7px;color:#dedede;left:180.50px;transform:translateX(-100%);">03:46:54</div>
<div class="t m" style="top:215.18px;font-size:11.7px;line-height:11.7px;color:#dedede;left:242.00px;transform:translateX(-100%);">100 %</div>
<div class="t m" style="top:215.18px;font-size:11.7px;line-height:11.7px;color:#dedede;left:309.00px;transform:translateX(-100%);">6</div>
<div style="left:313.40px;top:216.05px;width:1.20px;height:7.50px;background:#2f96f2;"></div>
<div class="t m" style="top:231.93px;font-size:11.7px;line-height:11.7px;color:#dedede;left:12.40px;">2021-11-09</div>
<div class="t m" style="top:231.93px;font-size:11.7px;line-height:11.7px;color:#dedede;left:180.50px;transform:translateX(-100%);">00:13:49</div>
<div class="t m" style="top:231.93px;font-size:11.7px;line-height:11.7px;color:#dedede;left:242.00px;transform:translateX(-100%);">90 %</div>
<div class="t m" style="top:231.93px;font-size:11.7px;line-height:11.7px;color:#dedede;left:309.00px;transform:translateX(-100%);">7</div>
<div style="left:313.40px;top:232.80px;width:1.20px;height:7.50px;background:#2f96f2;"></div>
<div class="t m" style="top:248.68px;font-size:11.7px;line-height:11.7px;color:#dedede;left:12.40px;">2021-10-24</div>
<div class="t m" style="top:248.68px;font-size:11.7px;line-height:11.7px;color:#dedede;left:180.50px;transform:translateX(-100%);">00:10:28</div>
<div class="t m" style="top:248.68px;font-size:11.7px;line-height:11.7px;color:#dedede;left:242.00px;transform:translateX(-100%);">59 %</div>
<div class="t m" style="top:248.68px;font-size:11.7px;line-height:11.7px;color:#dedede;left:309.00px;transform:translateX(-100%);">4</div>
<div style="left:482.50px;top:42.50px;width:11.50px;height:217.00px;background:#383838;"></div>
<div style="left:482.80px;top:42.50px;width:10.50px;height:10.50px;background:#4a4a4a;border:1px solid #555;"></div>
<svg style="left:484.50px;top:45.50px;" width="7" height="4" viewBox="0 0 7 4"><path d="M0 4L3.5 0L7 4Z" fill="#cfcfcf"/></svg>
<div style="left:482.80px;top:250.00px;width:10.50px;height:10.50px;background:#4a4a4a;border:1px solid #555;"></div>
<svg style="left:484.50px;top:253.50px;" width="7" height="4" viewBox="0 0 7 4"><path d="M0 0L3.5 4L7 0Z" fill="#cfcfcf"/></svg>
<div style="left:483.00px;top:204.50px;width:10.50px;height:27.50px;background:#4c4c4c;border:1px solid #575757;"></div>
<div class="t" style="top:272.30px;font-size:12.4px;line-height:12.4px;color:#dedede;left:234.00px;">Word count cap for the histogram</div>
<div style="left:428.00px;top:268.80px;width:66.00px;height:18.50px;background:#2f2f2f;border:1px solid #454545;border-radius:2px;"></div>
<div class="t" style="top:272.30px;font-size:12.4px;line-height:12.4px;color:#dedede;left:431.00px;">1000</div>
<div style="left:483.00px;top:269.80px;width:10.50px;height:16.50px;background:#404040;"></div>
<svg style="left:485.00px;top:271.50px;" width="7" height="4" viewBox="0 0 7 4"><path d="M0 4L3.5 0L7 4Z" fill="#bbb"/></svg>
<svg style="left:485.00px;top:280.50px;" width="7" height="4" viewBox="0 0 7 4"><path d="M0 0L3.5 4L7 0Z" fill="#bbb"/></svg>
<div class="t" style="top:297.10px;font-size:12.4px;line-height:12.4px;color:#dedede;left:8.60px;">Sum Totals</div>
<div style="left:9.40px;top:312.90px;width:239.00px;height:144.30px;background:transparent;border:1px solid #444;border-radius:3px;"></div>
<div class="t" style="top:325.20px;font-size:12.4px;line-height:12.4px;color:#dedede;left:18.80px;">Total Time:</div>
<div class="t m" style="top:326.73px;font-size:11.7px;line-height:11.7px;color:#dedede;left:238.50px;transform:translateX(-100%);">4-16:48:42</div>
<div class="t" style="top:346.92px;font-size:12.4px;line-height:12.4px;color:#dedede;left:18.80px;">Idle Time:</div>
<div class="t m" style="top:348.45px;font-size:11.7px;line-height:11.7px;color:#dedede;left:238.50px;transform:translateX(-100%);">4-04:40:16</div>
<div class="t" style="top:368.64px;font-size:12.4px;line-height:12.4px;color:#dedede;left:18.80px;">Filtered Time:</div>
<div class="t m" style="top:370.17px;font-size:11.7px;line-height:11.7px;color:#dedede;left:238.50px;transform:translateX(-100%);">18:01:50</div>
<div class="t" style="top:390.36px;font-size:12.4px;line-height:12.4px;color:#dedede;left:18.80px;">Novel Word Count:</div>
<div class="t m" style="top:391.89px;font-size:11.7px;line-height:11.7px;color:#dedede;left:238.50px;transform:translateX(-100%);">1,016</div>
<div class="t" style="top:412.08px;font-size:12.4px;line-height:12.4px;color:#dedede;left:18.80px;">Notes Word Count:</div>
<div class="t m" style="top:413.61px;font-size:11.7px;line-height:11.7px;color:#dedede;left:238.50px;transform:translateX(-100%);">417</div>
<div class="t" style="top:433.80px;font-size:12.4px;line-height:12.4px;color:#dedede;left:18.80px;">Total Word Count:</div>
<div class="t m" style="top:435.33px;font-size:11.7px;line-height:11.7px;color:#dedede;left:238.50px;transform:translateX(-100%);">1,433</div>
<div class="t" style="top:297.10px;font-size:12.4px;line-height:12.4px;color:#dedede;left:254.30px;">Filters</div>
<div style="left:255.30px;top:312.90px;width:239.00px;height:144.30px;background:transparent;border:1px solid #444;border-radius:3px;"></div>
<div class="t" style="top:323.90px;font-size:12.4px;line-height:12.4px;color:#dedede;left:264.50px;">Count novel files</div>
<div class="" style="left:459.50px;top:323.10px;width:24.50px;height:12.00px;background:#2f8cf0;border-radius:6.0px;"></div>
<div class="" style="left:473.20px;top:324.30px;width:9.60px;height:9.60px;background:#fff;border-radius:50%;"></div>
<div class="t" style="top:343.85px;font-size:12.4px;line-height:12.4px;color:#dedede;left:264.50px;">Count note files</div>
<div class="" style="left:459.50px;top:343.05px;width:24.50px;height:12.00px;background:#2f8cf0;border-radius:6.0px;"></div>
<div class="" style="left:473.20px;top:344.25px;width:9.60px;height:9.60px;background:#fff;border-radius:50%;"></div>
<div class="t" style="top:363.80px;font-size:12.4px;line-height:12.4px;color:#dedede;left:264.50px;">Hide zero word count</div>
<div class="" style="left:459.50px;top:363.00px;width:24.50px;height:12.00px;background:#2f8cf0;border-radius:6.0px;"></div>
<div class="" style="left:473.20px;top:364.20px;width:9.60px;height:9.60px;background:#fff;border-radius:50%;"></div>
<div class="t" style="top:383.75px;font-size:12.4px;line-height:12.4px;color:#dedede;left:264.50px;">Hide negative word count</div>
<div class="" style="left:459.50px;top:382.95px;width:24.50px;height:12.00px;background:#2f8cf0;border-radius:6.0px;"></div>
<div class="" style="left:473.20px;top:384.15px;width:9.60px;height:9.60px;background:#fff;border-radius:50%;"></div>
<div class="t" style="top:403.70px;font-size:12.4px;line-height:12.4px;color:#dedede;left:264.50px;">Group entries by day</div>
<div class="" style="left:459.50px;top:402.90px;width:24.50px;height:12.00px;background:#2f8cf0;border-radius:6.0px;"></div>
<div class="" style="left:473.20px;top:404.10px;width:9.60px;height:9.60px;background:#fff;border-radius:50%;"></div>
<div class="t" style="top:423.65px;font-size:12.4px;line-height:12.4px;color:#dedede;left:264.50px;">Show idle time</div>
<div class="" style="left:459.50px;top:422.85px;width:24.50px;height:12.00px;background:#4a4a4a;border-radius:6.0px;"></div>
<div class="" style="left:460.10px;top:423.45px;width:10.80px;height:10.80px;background:#fff;border-radius:50%;"></div>
<div style="left:347.20px;top:463.50px;width:74.80px;height:19.60px;background:#444;border:1px solid #2e2e2e;border-radius:3px;"></div>
<div class="t" style="top:468.10px;font-size:12.4px;line-height:12.4px;color:#dedede;left:357.00px;">Save As</div>
<svg style="left:409.00px;top:472.00px;" width="6" height="3" viewBox="0 0 6 3"><path d="M0 0H6L3 3Z" fill="#bbb"/></svg>
<div style="left:427.80px;top:463.50px;width:66.40px;height:19.60px;background:#444;border:1px solid #2e2e2e;border-radius:3px;"></div>
<svg style="left:439.00px;top:468.50px;" width="9" height="9" viewBox="0 0 9 9"><path d="M1 1L8 8M8 1L1 8" stroke="#d0d0d0" stroke-width="1.4"/></svg>
<div class="t" style="top:468.10px;font-size:12.4px;line-height:12.4px;color:#dedede;left:451.50px;"><u>C</u>lose</div></div>
<div class="win" style="left:687px;top:198.5px;width:794px;height:645px;background:#3a3a3a;border-radius:6px 6px 0 0;box-shadow:0 0 0 1px #1a1a1a;"><div style="left:0.00px;top:0.00px;width:794.00px;height:30.30px;background:#353535;"></div>
<div style="left:0.00px;top:0.50px;width:794.00px;height:1.00px;background:#424242;"></div>
<div style="left:0.00px;top:30.30px;width:794.00px;height:1.20px;background:#1e1e1e;"></div>
<div class="t" style="top:10.73px;font-size:12.6px;line-height:12.6px;color:#b9b9b9;left:396.00px;transform:translateX(-50%);">Build Manuscript</div>
<svg style="left:773.80px;top:12.50px;" width="8.2" height="8.2" viewBox="0 0 8.2 8.2"><path d="M0.8 0.8L7.4 7.4M7.4 0.8L0.8 7.4" stroke="#d2d2d2" stroke-width="1.5"/></svg>
<div class="t" style="top:46.37px;font-size:11.5px;line-height:11.5px;color:#e8e8e8;font-weight:bold;left:9.60px;">Builds</div>
<svg style="left:189.70px;top:46.80px;" width="7.6" height="7.8" viewBox="0 0 7.6 7.8"><path d="M3.8 0V7.8M0 3.9H7.6" stroke="#8fd19a" stroke-width="1.1"/></svg>
<svg style="left:208.00px;top:50.30px;" width="8.1" height="1.4" viewBox="0 0 8.1 1.4"><path d="M0 0.7H8.1" stroke="#e5737a" stroke-width="1.3"/></svg>
<svg style="left:225.50px;top:45.10px;" width="10" height="11.5" viewBox="0 0 10 11.5"><g fill="none" stroke="#5b9bd8" stroke-width="1.1" stroke-linejoin="round"><rect x="2.8" y="0.55" width="6.6" height="8.2" rx="1.1"/><path d="M0.55 2.8V9.6Q0.55 10.9 1.8 10.9H7.2"/></g></svg>
<svg style="left:243.80px;top:45.80px;" width="10.5" height="10" viewBox="0 0 10.5 10"><path d="M9.3 1.2L1.8 8.7" stroke="#8fd19a" stroke-width="3.2" stroke-linecap="round"/><path d="M8.2 2.3L2.9 7.6" stroke="#3a3a3a" stroke-width="0.8" stroke-dasharray="1 0.7"/></svg>
<div style="left:8.80px;top:64.30px;width:248.70px;height:166.00px;background:#3d3d3d;border:1px solid #2f2f2f;"></div>
<div style="left:9.80px;top:65.70px;width:247.20px;height:16.60px;background:#3199f1;"></div>
<svg style="left:13.60px;top:68.20px;--bg:#3199f1;color:#5aa6ee" width="11.2" height="11.2"><use href="#build"/></svg>
<div class="t" style="top:68.73px;font-size:12.6px;line-height:12.6px;color:#ffffff;left:30.00px;">My Manuscript</div>
<svg style="left:13.60px;top:84.95px;color:#5b9bd8" width="11.2" height="11.2"><use href="#build"/></svg>
<div class="t" style="top:85.48px;font-size:12.6px;line-height:12.6px;color:#dedede;left:30.00px;">Default</div>
<svg style="left:13.60px;top:101.70px;color:#5b9bd8" width="11.2" height="11.2"><use href="#build"/></svg>
<div class="t" style="top:102.23px;font-size:12.6px;line-height:12.6px;color:#dedede;left:30.00px;">Everything</div>
<svg style="left:13.60px;top:118.45px;color:#5b9bd8" width="11.2" height="11.2"><use href="#build"/></svg>
<div class="t" style="top:118.98px;font-size:12.6px;line-height:12.6px;color:#dedede;left:30.00px;">Markdown</div>
<div style="left:128.00px;top:231.80px;width:1.20px;height:1.20px;background:#9a9a9a;"></div>
<div style="left:130.40px;top:231.80px;width:1.20px;height:1.20px;background:#9a9a9a;"></div>
<div style="left:132.80px;top:231.80px;width:1.20px;height:1.20px;background:#9a9a9a;"></div>
<div style="left:135.20px;top:231.80px;width:1.20px;height:1.20px;background:#9a9a9a;"></div>
<div style="left:137.60px;top:231.80px;width:1.20px;height:1.20px;background:#9a9a9a;"></div>
<div style="left:140.00px;top:231.80px;width:1.20px;height:1.20px;background:#9a9a9a;"></div>
<div class="t" style="top:239.83px;font-size:12.6px;line-height:12.6px;color:#3d9ef0;left:15.90px;">Details</div>
<div class="t" style="top:239.83px;font-size:12.6px;line-height:12.6px;color:#dedede;left:68.60px;">Outline</div>
<div style="left:9.50px;top:256.50px;width:248.00px;height:323.50px;background:#3d3d3d;border:1px solid #2f2f2f;"></div>
<div style="left:10.20px;top:257.00px;width:246.80px;height:17.00px;background:#4a4a4a;"></div>
<div style="left:144.80px;top:258.50px;width:1.00px;height:14.00px;background:#5a5a5a;"></div>
<div class="t" style="top:260.63px;font-size:12.6px;line-height:12.6px;color:#dedede;left:11.50px;">Setting</div>
<div class="t" style="top:260.63px;font-size:12.6px;line-height:12.6px;color:#dedede;left:148.00px;">Value</div>
<div class="t" style="top:277.89px;font-size:12.3px;line-height:12.3px;color:#dedede;left:25.00px;">Name</div>
<div class="t" style="top:278.06px;font-size:12.1px;line-height:12.1px;color:#dedede;left:149.00px;">My Manuscript</div>
<div class="t" style="top:292.96px;font-size:12.3px;line-height:12.3px;color:#dedede;left:24.70px;">Selection</div>
<svg style="left:13.00px;top:296.27px;" width="7" height="4" viewBox="0 0 7 4"><path d="M0 0H7L3.5 3.8Z" fill="#bdbdbd"/></svg>
<div class="t" style="top:308.03px;font-size:12.3px;line-height:12.3px;color:#dedede;left:37.60px;">Novel</div>
<svg style="left:149.60px;top:306.84px;" width="12" height="12" viewBox="0 0 12 12"><circle cx="6" cy="6" r="5.2" fill="none" stroke="#6aa8e6" stroke-width="1.3"/><circle cx="6" cy="6" r="2.9" fill="#6aa8e6"/></svg>
<div class="t" style="top:323.10px;font-size:12.3px;line-height:12.3px;color:#dedede;left:37.60px;">Sequel</div>
<svg style="left:149.60px;top:321.91px;" width="12" height="12" viewBox="0 0 12 12"><circle cx="6" cy="6" r="5.2" fill="none" stroke="#6aa8e6" stroke-width="1.3"/><circle cx="6" cy="6" r="2.9" fill="#6aa8e6"/></svg>
<div class="t" style="top:338.17px;font-size:12.3px;line-height:12.3px;color:#dedede;left:37.60px;">Characters</div>
<svg style="left:149.60px;top:336.98px;" width="12" height="12" viewBox="0 0 12 12"><circle cx="6" cy="6" r="5.2" fill="none" stroke="#6aa8e6" stroke-width="1.3"/><circle cx="6" cy="6" r="2.9" fill="#6aa8e6"/></svg>
<div class="t" style="top:353.24px;font-size:12.3px;line-height:12.3px;color:#dedede;left:37.60px;">Locations</div>
<svg style="left:149.60px;top:352.05px;" width="12" height="12" viewBox="0 0 12 12"><circle cx="6" cy="6" r="5.2" fill="none" stroke="#6aa8e6" stroke-width="1.3"/></svg>
<div class="t" style="top:368.31px;font-size:12.3px;line-height:12.3px;color:#dedede;left:24.70px;">Headings</div>
<svg style="left:13.00px;top:371.62px;" width="7" height="4" viewBox="0 0 7 4"><path d="M0 0H7L3.5 3.8Z" fill="#bdbdbd"/></svg>
<div class="t" style="top:383.38px;font-size:12.3px;line-height:12.3px;color:#dedede;left:37.60px;">Partition Format</div>
<div class="t" style="top:383.55px;font-size:12.1px;line-height:12.1px;color:#dedede;left:149.00px;">Title</div>
<div class="t" style="top:398.45px;font-size:12.3px;line-height:12.3px;color:#dedede;left:37.60px;">Chapter Format</div>
<div class="t" style="top:398.62px;font-size:12.1px;line-height:12.1px;color:#dedede;left:149.00px;">Chapter 1: Point …</div>
<div class="t" style="top:413.52px;font-size:12.3px;line-height:12.3px;color:#dedede;left:37.60px;">Unnumbered Fo…</div>
<div class="t" style="top:413.69px;font-size:12.1px;line-height:12.1px;color:#dedede;left:149.00px;">Title</div>
<div class="t" style="top:428.59px;font-size:12.3px;line-height:12.3px;color:#dedede;left:37.60px;">Scene Format</div>
<div class="t" style="top:428.76px;font-size:12.1px;line-height:12.1px;color:#dedede;left:149.00px;">Scene 1.1: Title</div>
<div class="t" style="top:443.66px;font-size:12.3px;line-height:12.3px;color:#dedede;left:37.60px;">Alt. Scene Format</div>
<div class="t" style="top:443.83px;font-size:12.1px;line-height:12.1px;color:#dedede;left:149.00px;">Scene 1.1: Title</div>
<div class="t" style="top:458.73px;font-size:12.3px;line-height:12.3px;color:#dedede;left:37.60px;">Section Format</div>
<div class="t" style="top:473.80px;font-size:12.3px;line-height:12.3px;color:#dedede;left:24.70px;">Text Content</div>
<svg style="left:15.00px;top:475.11px;" width="4" height="7" viewBox="0 0 4 7"><path d="M0 0V7L3.8 3.5Z" fill="#bdbdbd"/></svg>
<div style="left:9.40px;top:585.70px;width:121.40px;height:21.40px;background:#505860;border:1px solid #3d9ef0;border-radius:3px;"></div>
<div class="t" style="top:590.93px;font-size:12.6px;line-height:12.6px;color:#dedede;left:70.00px;transform:translateX(-50%);">Preview</div>
<div style="left:137.00px;top:586.50px;width:120.30px;height:20.00px;background:#444;border:1px solid #2e2e2e;border-radius:3px;"></div>
<div class="t" style="top:590.93px;font-size:12.6px;line-height:12.6px;color:#dedede;left:197.00px;transform:translateX(-50%);">Print</div>
<div style="left:9.40px;top:613.30px;width:121.40px;height:20.00px;background:#444;border:1px solid #2e2e2e;border-radius:3px;"></div>
<div class="t" style="top:617.93px;font-size:12.6px;line-height:12.6px;color:#dedede;left:70.00px;transform:translateX(-50%);">Build</div>
<div style="left:137.00px;top:613.30px;width:120.30px;height:20.00px;background:#444;border:1px solid #2e2e2e;border-radius:3px;"></div>
<div class="t" style="top:617.93px;font-size:12.6px;line-height:12.6px;color:#dedede;left:197.00px;transform:translateX(-50%);">Close</div>
<div style="left:261.50px;top:41.50px;width:509.50px;height:489.30px;background:#ffffff;"></div>
<div style="left:261.50px;top:41.50px;width:509.50px;height:31.30px;background:#fffcbf;"></div>
<div class="t" style="top:46.46px;font-size:10.8px;line-height:10.8px;color:#111;font-weight:bold;left:516.50px;transform:translateX(-50%);-webkit-text-stroke:0.1px currentColor;">My Manuscript</div>
<div class="t" style="top:59.16px;font-size:10.8px;line-height:10.8px;color:#222;left:516.50px;transform:translateX(-50%);-webkit-text-stroke:0.1px currentColor;">Built: 2 minutes ago</div>
<div class="t" style="top:93.00px;font-size:30px;line-height:30px;color:#0c0c0c;font-weight:bold;left:517.00px;transform:translateX(-50%);-webkit-text-stroke:0.1px currentColor;">My Novel</div>
<div class="t" style="top:139.10px;font-size:12.4px;line-height:12.4px;color:#111;font-weight:bold;left:516.50px;transform:translateX(-50%);-webkit-text-stroke:0.1px currentColor;">By Jane Smith</div>
<div class="t" style="top:164.08px;font-size:12.55px;line-height:12.55px;color:#1e1e1e;left:516.30px;transform:translateX(-50%);-webkit-text-stroke:0.1px currentColor;">This is the title page. It should be the first document of the project.</div>
<div class="t" style="top:189.28px;font-size:12.55px;line-height:12.55px;color:#1e1e1e;left:516.30px;transform:translateX(-50%);-webkit-text-stroke:0.1px currentColor;">Word Count: 934</div>
<div style="left:295.20px;top:218.60px;width:442.20px;height:11.60px;background:#e2e2e2;"></div>
<div class="t" style="top:221.00px;font-size:8.5px;line-height:8.5px;color:#222;left:516.30px;transform:translateX(-50%);-webkit-text-stroke:0.1px currentColor;">New Page</div>
<div style="left:295.20px;top:402.50px;width:442.20px;height:11.60px;background:#e2e2e2;"></div>
<div class="t" style="top:404.90px;font-size:8.5px;line-height:8.5px;color:#222;left:516.30px;transform:translateX(-50%);-webkit-text-stroke:0.1px currentColor;">New Page</div>
<div class="t" style="top:312.80px;font-size:12.4px;line-height:12.4px;color:#1e1e1e;left:295.20px;-webkit-text-stroke:0.1px currentColor;">This is a plain page with some text on it.</div>
<div class="t" style="left:295.20px;top:335.00px;width:442.20px;height:60.00px;font-size:12.4px;line-height:17.45px;color:#1e1e1e;white-space:normal;text-align:justify;text-indent:37px;-webkit-text-stroke:0.1px currentColor;">If you want the text to start on a fresh page, add the [newpage] code above the text. You can also add empty paragraphs with the [vspace] code. The above code adds two empty paragraphs before the text starts.</div>
<div class="t" style="top:468.43px;font-size:29.5px;line-height:29.5px;color:#2f64a8;font-weight:bold;left:516.50px;transform:translateX(-50%);-webkit-text-stroke:0.1px currentColor;">Part One</div>
<div class="t" style="top:515.40px;font-size:12.4px;line-height:12.4px;color:#1e1e1e;left:516.00px;transform:translateX(-50%);-webkit-text-stroke:0.1px currentColor;">In the beginning …</div>
<div style="left:772.50px;top:41.50px;width:11.00px;height:489.30px;background:#383838;"></div>
<div style="left:772.80px;top:42.00px;width:10.30px;height:10.00px;background:#4a4a4a;border:1px solid #555;"></div>
<svg style="left:774.50px;top:45.00px;" width="7" height="4" viewBox="0 0 7 4"><path d="M0 4L3.5 0L7 4Z" fill="#cfcfcf"/></svg>
<div style="left:772.80px;top:74.40px;width:10.30px;height:44.40px;background:#4a4a4a;border:1px solid #555;"></div>
<div style="left:772.80px;top:520.00px;width:10.30px;height:10.00px;background:#4a4a4a;border:1px solid #555;"></div>
<svg style="left:774.50px;top:523.00px;" width="7" height="4" viewBox="0 0 7 4"><path d="M0 0L3.5 4L7 0Z" fill="#cfcfcf"/></svg>
<svg style="left:265.50px;top:543.50px;" width="6" height="3.5" viewBox="0 0 6 3.5"><path d="M0 0H6L3 3.5Z" fill="#cfcfcf"/></svg>
<div class="t" style="top:538.96px;font-size:10.8px;line-height:10.8px;color:#dedede;left:280.90px;">Words</div>
<div class="t" style="top:538.96px;font-size:10.8px;line-height:10.8px;color:#dedede;left:407.90px;transform:translateX(-100%);">1,239</div>
<div class="t" style="top:539.21px;font-size:10.5px;line-height:10.5px;color:#dedede;left:435.10px;">Characters</div>
<div class="t" style="top:538.96px;font-size:10.8px;line-height:10.8px;color:#dedede;left:641.00px;transform:translateX(-100%);">6,832</div>
<div class="t" style="top:555.71px;font-size:10.8px;line-height:10.8px;color:#dedede;left:280.90px;">Words in Headings</div>
<div class="t" style="top:555.71px;font-size:10.8px;line-height:10.8px;color:#dedede;left:407.90px;transform:translateX(-100%);">51</div>
<div class="t" style="top:555.96px;font-size:10.5px;line-height:10.5px;color:#dedede;left:435.10px;">Characters in Headings</div>
<div class="t" style="top:555.71px;font-size:10.8px;line-height:10.8px;color:#dedede;left:641.00px;transform:translateX(-100%);">275</div>
<div class="t" style="top:572.46px;font-size:10.8px;line-height:10.8px;color:#dedede;left:280.90px;">Words in Text</div>
<div class="t" style="top:572.46px;font-size:10.8px;line-height:10.8px;color:#dedede;left:407.90px;transform:translateX(-100%);">934</div>
<div class="t" style="top:572.71px;font-size:10.5px;line-height:10.5px;color:#dedede;left:435.10px;">Characters in Text</div>
<div class="t" style="top:572.46px;font-size:10.8px;line-height:10.8px;color:#dedede;left:641.00px;transform:translateX(-100%);">5,144</div>
<div class="t" style="top:589.46px;font-size:10.5px;line-height:10.5px;color:#dedede;left:435.10px;">Characters, No Spaces</div>
<div class="t" style="top:589.21px;font-size:10.8px;line-height:10.8px;color:#dedede;left:641.00px;transform:translateX(-100%);">5,669</div>
<div class="t" style="top:605.96px;font-size:10.8px;line-height:10.8px;color:#dedede;left:280.90px;">Headings</div>
<div class="t" style="top:605.96px;font-size:10.8px;line-height:10.8px;color:#dedede;left:407.90px;transform:translateX(-100%);">15</div>
<div class="t" style="top:606.21px;font-size:10.5px;line-height:10.5px;color:#dedede;left:435.10px;">Characters in Headings, No Spaces</div>
<div class="t" style="top:605.96px;font-size:10.8px;line-height:10.8px;color:#dedede;left:641.00px;transform:translateX(-100%);">239</div>
<div class="t" style="top:622.71px;font-size:10.8px;line-height:10.8px;color:#dedede;left:280.90px;">Paragraphs</div>
<div class="t" style="top:622.71px;font-size:10.8px;line-height:10.8px;color:#dedede;left:407.90px;transform:translateX(-100%);">36</div>
<div class="t" style="top:622.96px;font-size:10.5px;line-height:10.5px;color:#dedede;left:435.10px;">Characters in Text, No Spaces</div>
<div class="t" style="top:622.71px;font-size:10.8px;line-height:10.8px;color:#dedede;left:641.00px;transform:translateX(-100%);">4,240</div>
<div class="t" style="top:539.23px;font-size:11.9px;line-height:11.9px;color:#dedede;left:651.00px;">Show Page Breaks</div>
<div class="" style="left:759.00px;top:537.40px;width:24.20px;height:11.70px;background:#2f8cf0;border-radius:5.85px;"></div>
<div class="" style="left:772.70px;top:538.60px;width:9.30px;height:9.30px;background:#fff;border-radius:50%;"></div>
<div style="left:789.00px;top:632.50px;width:1.30px;height:1.30px;background:#9a9a9a;"></div>
<div style="left:789.00px;top:636.50px;width:1.30px;height:1.30px;background:#9a9a9a;"></div>
<div style="left:789.00px;top:640.50px;width:1.30px;height:1.30px;background:#9a9a9a;"></div>
<div style="left:785.00px;top:636.50px;width:1.30px;height:1.30px;background:#9a9a9a;"></div>
<div style="left:785.00px;top:640.50px;width:1.30px;height:1.30px;background:#9a9a9a;"></div>
<div style="left:781.00px;top:640.50px;width:1.30px;height:1.30px;background:#9a9a9a;"></div></div></body></html>
